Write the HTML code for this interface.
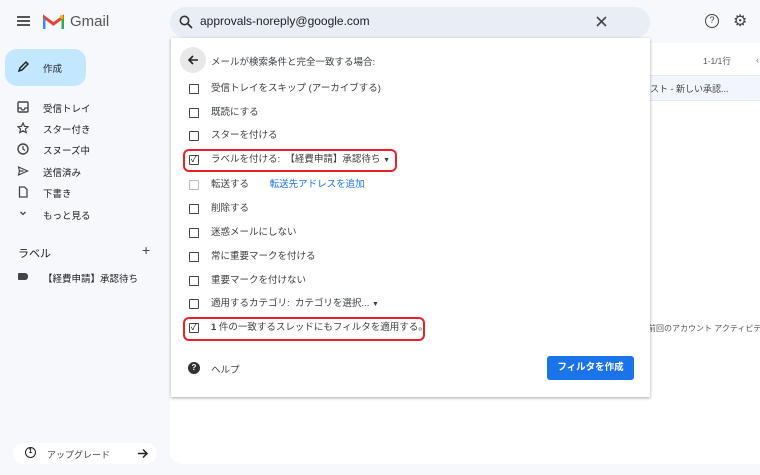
<!DOCTYPE html>
<html><head><meta charset="utf-8"><style>
*{margin:0;padding:0;box-sizing:border-box}
body{width:760px;height:475px;overflow:hidden;background:#f6f8fc;font-family:"Liberation Sans","Noto Sans CJK JP",sans-serif;color:#202124;position:relative;font-size:10px}
.a{position:absolute}
.cb{position:absolute;left:189px;width:10px;height:10px;border:1.5px solid #444;border-radius:1px}
.lbl{position:absolute;left:211px;font-size:9.5px;color:#3c4043;line-height:12px}
.nav{position:absolute;left:43px;font-size:9.5px;color:#202124}
.ni{position:absolute;left:17px}
.red{position:absolute;border:2.5px solid #e8202a;border-radius:6px}
</style></head><body>
<div class="a" style="left:17px;top:16px;width:13px;height:1.6px;background:#555;box-shadow:0 4px 0 #555,0 8px 0 #555"></div>
<svg class="a" style="left:43px;top:14px" width="21" height="16" viewBox="0 0 21 16"><path d="M1 15V3l9.5 7L20 3v12" fill="none" stroke="#ea4335" stroke-width="3"/><path d="M1 15V4" stroke="#4285f4" stroke-width="3"/><path d="M20 15V4" stroke="#34a853" stroke-width="3"/><path d="M17 2l3 2" stroke="#fbbc04" stroke-width="3"/></svg>
<div class="a" style="left:70px;top:13px;font-size:15px;color:#555">Gmail</div>
<div class="a" style="left:170px;top:7px;width:480px;height:31px;background:#e9eef6;border-radius:16px"></div>
<svg class="a" style="left:179px;top:15px" width="14" height="14" viewBox="0 0 14 14"><circle cx="5.5" cy="5.5" r="4.2" fill="none" stroke="#333" stroke-width="1.6"/><path d="M8.5 8.5L13 13" stroke="#333" stroke-width="1.8"/></svg>
<div class="a" style="left:200px;top:14px;font-size:12px;color:#202124">approvals-noreply@google.com</div>
<svg class="a" style="left:596px;top:16px" width="11" height="11" viewBox="0 0 11 11"><path d="M1 1l9 9M10 1l-9 9" stroke="#444" stroke-width="1.6"/></svg>
<div class="a" style="left:705px;top:14px;width:14px;height:14px;border:1.5px solid #444;border-radius:50%;font-size:9px;text-align:center;line-height:11px;color:#444">?</div>
<div class="a" style="left:733px;top:11px;font-size:16px;color:#444">⚙</div>
<!-- sidebar -->
<div class="a" style="left:5px;top:49px;width:81px;height:37px;background:#c2e7ff;border-radius:12px"></div>
<svg class="a" style="left:17px;top:60px" width="13" height="13" viewBox="0 0 13 13"><path d="M2 11l1-3 6-6 2 2-6 6z" fill="none" stroke="#222" stroke-width="1.5"/></svg>
<div class="a" style="left:43px;top:61px;font-size:9.5px">作成</div>
<svg class="ni" style="top:101px" width="12" height="12" viewBox="0 0 12 12"><rect x="1" y="1" width="10" height="10" rx="1" fill="none" stroke="#444" stroke-width="1.4"/><path d="M1 7h3a2 2 0 0 0 4 0h3" fill="none" stroke="#444" stroke-width="1.3"/></svg>
<div class="nav" style="top:101px">受信トレイ</div>
<svg class="ni" style="top:122px" width="12" height="12" viewBox="0 0 12 12"><path d="M6 1l1.5 3.3 3.5.4-2.6 2.4.8 3.5L6 8.8 2.8 10.6l.8-3.5L1 4.7l3.5-.4z" fill="none" stroke="#444" stroke-width="1.2"/></svg>
<div class="nav" style="top:122px">スター付き</div>
<svg class="ni" style="top:143px" width="12" height="12" viewBox="0 0 12 12"><circle cx="6" cy="6" r="5" fill="none" stroke="#444" stroke-width="1.4"/><path d="M6 3v3l2 1.5" fill="none" stroke="#444" stroke-width="1.2"/></svg>
<div class="nav" style="top:143px">スヌーズ中</div>
<svg class="ni" style="top:165px" width="12" height="12" viewBox="0 0 12 12"><path d="M1.5 2l9 4-9 4 1-4z M2.5 6h4" fill="none" stroke="#444" stroke-width="1.2"/></svg>
<div class="nav" style="top:165px">送信済み</div>
<svg class="ni" style="top:186px" width="12" height="12" viewBox="0 0 12 12"><path d="M2.5 1h5l2.5 2.5V11h-7.5z" fill="none" stroke="#444" stroke-width="1.3"/></svg>
<div class="nav" style="top:186px">下書き</div>
<svg class="ni" style="top:209px" width="12" height="10" viewBox="0 0 12 10"><path d="M3.5 3l2.5 2.5L8.5 3" fill="none" stroke="#444" stroke-width="1.3"/></svg>
<div class="nav" style="top:208px">もっと見る</div>
<div class="a" style="left:18px;top:245px;font-size:11px;color:#202124">ラベル</div>
<div class="a" style="left:142px;top:242px;font-size:14px;color:#444">+</div>
<div class="a" style="left:18px;top:273px;width:10px;height:7px;background:#444;border-radius:1px 3px 3px 1px"></div>
<div class="a" style="left:43px;top:271px;font-size:9.5px">【経費申請】承認待ち</div>
<div class="a" style="left:13px;top:443px;width:144px;height:21px;background:#fff;border-radius:11px"></div>
<div class="a" style="left:25px;top:447px;width:11px;height:11px;border:1.5px solid #222;border-radius:50%;font-size:7px;text-align:center;line-height:8px;font-weight:bold">1</div>
<div class="a" style="left:47px;top:448px;font-size:9px;color:#444">アップグレード</div>
<svg class="a" style="left:137px;top:448px" width="12" height="11" viewBox="0 0 12 11"><path d="M1 5.5h9M6 1.5l4 4-4 4" fill="none" stroke="#222" stroke-width="1.5"/></svg>
<!-- main panel -->
<div class="a" style="left:170px;top:43px;width:590px;height:421px;background:#fff;border-radius:12px 0 0 12px"></div>
<div class="a" style="left:703px;top:55px;font-size:8.5px;color:#555">1-1/1行</div>
<div class="a" style="left:756px;top:55px;font-size:9px;color:#777">‹</div>
<div class="a" style="left:640px;top:75px;width:120px;height:26px;background:#f2f6fc;border-top:1px solid #e4e8ee;border-bottom:1px solid #e4e8ee"></div>
<div class="a" style="left:650px;top:82px;font-size:9px;color:#444">スト - 新しい承認...</div>
<div class="a" style="left:648px;top:323px;font-size:8px;color:#555;white-space:nowrap">前回のアカウント アクティビティ</div>
<!-- popup -->
<div class="a" style="left:171px;top:38px;width:479px;height:359px;background:#fff;box-shadow:0 1px 3px rgba(0,0,0,.35)"></div>
<div class="a" style="left:180px;top:47px;width:26px;height:26px;background:#e8e8e8;border-radius:50%"></div>
<svg class="a" style="left:187px;top:54px" width="12" height="12" viewBox="0 0 12 12"><path d="M11 6H2M6 2L2 6l4 4" fill="none" stroke="#222" stroke-width="1.6"/></svg>
<div class="a" style="left:211px;top:54px;font-size:9.5px;color:#3c4043">メールが検索条件と完全一致する場合:</div>
<div class="cb" style="top:84px"></div><div class="lbl" style="top:83px">受信トレイをスキップ (アーカイブする)</div>
<div class="cb" style="top:108px"></div><div class="lbl" style="top:107px">既読にする</div>
<div class="cb" style="top:131px"></div><div class="lbl" style="top:130px">スターを付ける</div>
<div class="cb" style="top:155px;font-size:9px;line-height:7px;text-align:center">✓</div><div class="lbl" style="top:154px">ラベルを付ける:&nbsp; 【経費申請】承認待ち <span style="font-size:7px">▼</span></div>
<div class="cb" style="top:180px;border-color:#bbb"></div><div class="lbl" style="top:179px">転送する <span style="margin-left:18px;color:#1a73e8">転送先アドレスを追加</span></div>
<div class="cb" style="top:204px"></div><div class="lbl" style="top:203px">削除する</div>
<div class="cb" style="top:228px"></div><div class="lbl" style="top:227px">迷惑メールにしない</div>
<div class="cb" style="top:252px"></div><div class="lbl" style="top:251px">常に重要マークを付ける</div>
<div class="cb" style="top:276px"></div><div class="lbl" style="top:275px">重要マークを付けない</div>
<div class="cb" style="top:299px"></div><div class="lbl" style="top:298px">適用するカテゴリ:&nbsp; カテゴリを選択... <span style="font-size:7px">▼</span></div>
<div class="cb" style="top:323px;font-size:9px;line-height:7px;text-align:center">✓</div><div class="lbl" style="top:322px"><b>1</b> 件の一致するスレッドにもフィルタを適用する。</div>
<div class="red" style="left:183px;top:149px;width:214px;height:23px"></div>
<div class="red" style="left:183px;top:317px;width:242px;height:24px"></div>
<div class="a" style="left:188px;top:362px;width:12px;height:12px;background:#333;border-radius:50%;color:#fff;font-size:8px;text-align:center;line-height:12px;font-weight:bold">?</div>
<div class="a" style="left:211px;top:362px;font-size:9.5px;color:#3c4043">ヘルプ</div>
<div class="a" style="left:547px;top:356px;width:87px;height:24px;background:#1a73e8;border-radius:3px;color:#fff;font-size:9.5px;font-weight:bold;text-align:center;line-height:24px">フィルタを作成</div>
</body></html>
